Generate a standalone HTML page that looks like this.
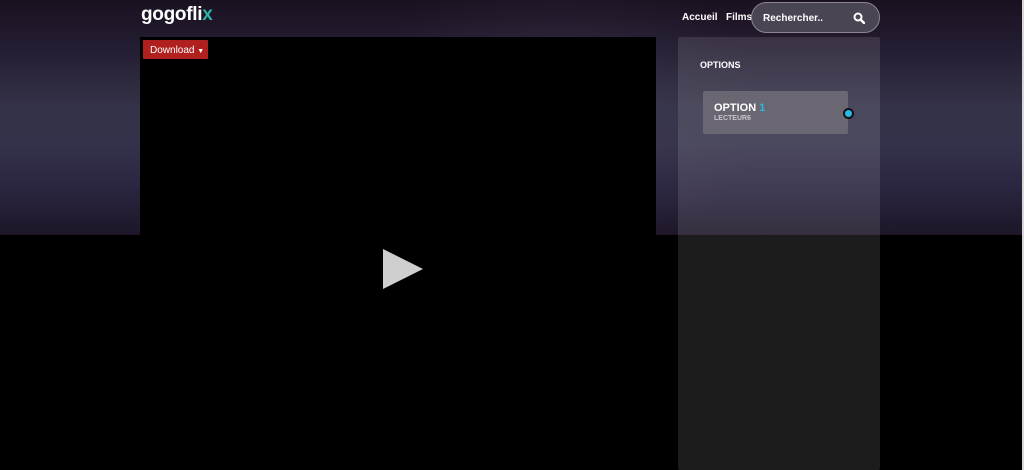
<!DOCTYPE html>
<html><head><meta charset="utf-8"><style>
*{margin:0;padding:0;box-sizing:border-box}
body{width:1024px;height:470px;overflow:hidden;background:#000;font-family:"Liberation Sans",sans-serif;position:relative}
.bg{position:absolute;left:0;top:0;width:1024px;height:235px;background:linear-gradient(180deg,#1a1120 0%,#231b2f 18%,#343248 45%,#34324a 62%,#2a2540 80%,#1e1628 100%)}
.bg2{position:absolute;left:0;top:0;width:1024px;height:235px;background:radial-gradient(ellipse 200px 150px at 560px 110px,rgba(80,75,95,.3),transparent)}
.edge{position:absolute;left:1022px;top:0;width:2px;height:470px;background:#d8d8d8}
.logo{position:absolute;left:141px;top:4px;color:#fff;font-weight:bold;font-size:19px;letter-spacing:-0.3px}
.logo span{color:#2bb5a8}
.nav{position:absolute;top:12px;color:#fff;font-size:10px;font-weight:bold}
.search{position:absolute;left:751px;top:2px;width:129px;height:31px;border-radius:16px;background:#4a4552;border:1px solid #8a8590;color:#fff;font-size:10px;font-weight:bold;padding:10px 0 0 11px}
.video{position:absolute;left:140px;top:37px;width:516px;height:433px;background:#000}
.dl{position:absolute;left:143px;top:40px;width:65px;height:19px;background:#b0201f;color:#fff;font-size:10px;padding:5px 0 0 7px;border-radius:1px}
.side{position:absolute;left:678px;top:37px;width:202px;height:433px;background:rgba(255,255,255,.11);border-radius:2px}
.opt{position:absolute;left:700px;top:60px;color:#fff;font-size:9px;font-weight:bold}
.card{position:absolute;left:703px;top:91px;width:145px;height:43px;background:#6a6772;border-radius:2px}
.card .t{position:absolute;left:11px;top:11px;color:#fff;font-size:11px;font-weight:bold}
.card .t b{color:#2ab8e6}
.card .s{position:absolute;left:11px;top:24px;color:#c8c6cc;font-size:7px;font-weight:bold}
.dot{position:absolute;left:843px;top:108px;width:11px;height:11px;border-radius:50%;background:#2ab8e6;border:2px solid #111}
</style></head><body>
<div class="bg"></div><div class="bg2"></div>
<div class="edge"></div>
<div class="logo">gogofli<span>x</span></div>
<div class="nav" style="left:682px">Accueil</div>
<div class="nav" style="left:726px">Films</div>
<div class="search">Rechercher..
<svg style="position:absolute;left:101px;top:9px" width="12" height="12" viewBox="0 0 12 12"><circle cx="5" cy="5" r="3.5" fill="none" stroke="#fff" stroke-width="2"/><line x1="7.5" y1="7.5" x2="11" y2="11" stroke="#fff" stroke-width="2.4" stroke-linecap="round"/></svg></div>
<div class="video"></div>
<div class="dl">Download <span style="font-size:7px">▼</span></div>
<svg style="position:absolute;left:383px;top:249px" width="40" height="40" viewBox="0 0 40 40"><polygon points="0,0 40,20 0,40" fill="#cfcfcf"/></svg>
<div class="side"></div>
<div class="opt">OPTIONS</div>
<div class="card"><div class="t">OPTION <b>1</b></div><div class="s">LECTEUR6</div></div>
<div class="dot"></div>
</body></html>
